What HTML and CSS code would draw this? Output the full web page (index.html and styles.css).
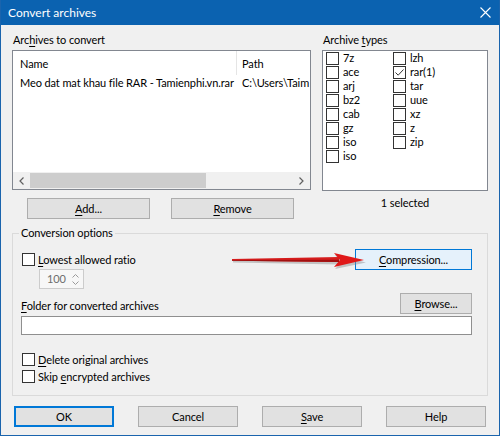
FILE: index.html
```html
<!DOCTYPE html>
<html>
<head>
<meta charset="utf-8">
<link rel="stylesheet" href="styles.css">
</head>
<body>
<div class="window">
  <div class="titlebar">
    <span class="title">Convert archives</span>
    <svg class="close" width="11" height="11" viewBox="0 0 11 11"><path d="M0.5 0.5 L10.5 10.5 M10.5 0.5 L0.5 10.5" stroke="#fff" stroke-width="1.1" fill="none"/></svg>
  </div>
  <div class="content">
    <div class="top">
      <div class="archives">
        <div class="label">Arc<u>h</u>ives to convert</div>
        <div class="listview">
          <div class="lv-header">
            <div class="col-name">Name</div>
            <div class="col-path">Path</div>
          </div>
          <div class="lv-body">
            <div class="lv-row">
              <div class="col-name">Meo dat mat khau file RAR - Tamienphi.vn.rar</div>
              <div class="col-path">C:\Users\Taim</div>
            </div>
          </div>
          <div class="hscroll">
            <div class="sb-btn"><svg width="5" height="8" viewBox="0 0 5 8"><path d="M4.5 0.5 L1 4 L4.5 7.5" stroke="#606060" stroke-width="1.2" fill="none"/></svg></div>
            <div class="sb-track"><div class="sb-thumb"></div></div>
            <div class="sb-btn"><svg width="5" height="8" viewBox="0 0 5 8"><path d="M0.5 0.5 L4 4 L0.5 7.5" stroke="#606060" stroke-width="1.2" fill="none"/></svg></div>
          </div>
        </div>
        <div class="btn-row">
          <button class="btn wide"><span><u>A</u>dd...</span></button>
          <button class="btn wide"><span><u>R</u>emove</span></button>
        </div>
      </div>
      <div class="types">
        <div class="label">Archive <u>t</u>ypes</div>
        <div class="types-box">
          <div class="ti"><span class="cb"></span><span>7z</span></div>
          <div class="ti"><span class="cb"></span><span>ace</span></div>
          <div class="ti"><span class="cb"></span><span>arj</span></div>
          <div class="ti"><span class="cb"></span><span>bz2</span></div>
          <div class="ti"><span class="cb"></span><span>cab</span></div>
          <div class="ti"><span class="cb"></span><span>gz</span></div>
          <div class="ti"><span class="cb"></span><span>iso</span></div>
          <div class="ti"><span class="cb"></span><span>iso</span></div>
          <div class="ti"><span class="cb"></span><span>lzh</span></div>
          <div class="ti"><span class="cb"><svg width="11" height="11" viewBox="0 0 11 11"><path d="M1.5 5.5 L4.2 8.2 L9.5 2.5" stroke="#333" stroke-width="1" fill="none"/></svg></span><span>rar(1)</span></div>
          <div class="ti"><span class="cb"></span><span>tar</span></div>
          <div class="ti"><span class="cb"></span><span>uue</span></div>
          <div class="ti"><span class="cb"></span><span>xz</span></div>
          <div class="ti"><span class="cb"></span><span>z</span></div>
          <div class="ti"><span class="cb"></span><span>zip</span></div>
        </div>
        <div class="selected">1 selected</div>
      </div>
    </div>

    <fieldset class="group">
      <legend>Conversion options</legend>
      <div class="row1">
        <div class="ratio">
          <div class="opt"><span class="cb"></span><span><u>L</u>owest allowed ratio</span></div>
          <div class="spinner">
            <div class="spin-val">100</div>
            <div class="spin-btns">
              <svg width="7" height="4" viewBox="0 0 7 4"><path d="M0.5 3.5 L3.5 0.5 L6.5 3.5" stroke="#9a9a9a" fill="none"/></svg>
              <svg width="7" height="4" viewBox="0 0 7 4"><path d="M0.5 0.5 L3.5 3.5 L6.5 0.5" stroke="#9a9a9a" fill="none"/></svg>
            </div>
          </div>
        </div>
        <button class="btn compress"><span><u>C</u>ompression...</span></button>
        <svg class="annot-arrow" width="136" height="20" viewBox="0 0 136 20">
          <polygon points="1,10 108,8.5 108,13.5 1,11.5" fill="#8a8a8a" opacity="0.45"/>
          <polygon points="103,4 134,11.5 103,18 109,11.5" fill="#8a8a8a" opacity="0.45"/>
          <polygon points="0,8 107,6 107,11 0,9.8" fill="#d51c1c"/>
          <polygon points="102,2 132,9 102,16 108,9" fill="#e01818"/>
          <polygon points="0,9.1 107,8.8 107,11 0,9.8" fill="#a01010"/>
        </svg>
      </div>
      <div class="row2">
        <span class="lbl"><u>F</u>older for converted archives</span>
        <button class="btn browse"><span><u>B</u>rowse...</span></button>
      </div>
      <div class="textbox"></div>
      <div class="checks">
        <div class="opt"><span class="cb"></span><span><u>D</u>elete original archives</span></div>
        <div class="opt"><span class="cb"></span><span>Skip <u>e</u>ncrypted archives</span></div>
      </div>
    </fieldset>

    <div class="footer">
      <button class="btn foot default">OK</button>
      <button class="btn foot">Cancel</button>
      <button class="btn foot"><span><u>S</u>ave</span></button>
      <button class="btn foot">Help</button>
    </div>
  </div>
</div>
</body>
</html>
```

FILE: styles.css
```css
* { box-sizing: border-box; }
html, body { margin: 0; padding: 0; }
body {
  font-family: Lato, "Open Sans", "Liberation Sans", sans-serif;
  font-size: 11px;
  letter-spacing: -0.1px;
  color: #000;
  background: #f0f0f0;
}
u { text-decoration-thickness: 1px; text-underline-offset: 1.5px; }

.window {
  width: 500px;
  height: 436px;
  background: #f0f0f0;
  border: 1px solid #1a64ad;
  border-top: 0;
  display: flex;
  flex-direction: column;
}
.titlebar {
  height: 25px;
  flex: none;
  background: #0b62b0;
  color: #fff;
  display: flex;
  align-items: center;
  justify-content: space-between;
  padding: 0 8px 0 7px;
}
.title { font-size: 12px; letter-spacing: 0; }
.close { display: block; }

.content {
  flex: 1;
  padding: 7px 11px 0 11px;
  display: flex;
  flex-direction: column;
}
.top { display: flex; gap: 11px; }
.archives { width: 299px; }
.types { width: 166px; }
.label { height: 16px; line-height: 16px; margin-bottom: 2px; padding-left: 1px; }

.listview {
  height: 140px;
  border: 1px solid #828790;
  background: #fff;
  display: flex;
  flex-direction: column;
  overflow: hidden;
}
.lv-header, .lv-row { display: flex; white-space: nowrap; }
.lv-header { height: 24px; flex: none; }
.lv-header > div { display: flex; align-items: center; }
.col-name { width: 224px; flex: none; padding-left: 7px; overflow: hidden; }
.lv-header .col-name { border-right: 1px solid #e5e5e5; }
.col-path { padding-left: 5px; }
.lv-body { flex: 1; }
.lv-row { height: 16px; line-height: 16px; }
.hscroll { height: 17px; flex: none; display: flex; background: #f0f0f0; }
.sb-btn { width: 17px; display: flex; align-items: center; justify-content: center; }
.sb-track { flex: 1; padding: 1px 0; }
.sb-thumb { width: 176px; height: 100%; background: #cdcdcd; }

.btn-row { display: flex; gap: 21px; padding-left: 15px; margin-top: 8px; }
.btn {
  height: 21px;
  border: 1px solid #adadad;
  background: #e1e1e1;
  font: inherit;
  letter-spacing: inherit;
  color: #000;
  padding: 0;
  display: flex;
  align-items: center;
  justify-content: center;
}
.wide { width: 123px; }

.types-box {
  height: 141px;
  border: 1px solid #828790;
  background: #fff;
  display: grid;
  grid-template-rows: repeat(8, 14px);
  grid-template-columns: 67px 1fr;
  grid-auto-flow: column;
  align-content: start;
  padding-left: 3px;
}
.ti { display: flex; align-items: center; gap: 4px; height: 14px; line-height: 12px; }
.cb {
  width: 13px;
  height: 13px;
  flex: none;
  border: 1px solid #333;
  background: #fff;
  display: flex;
  align-items: center;
  justify-content: center;
}
.selected { text-align: center; margin-top: 4px; line-height: 16px; }

.group {
  margin: 6px 0 0 0;
  padding: 8px 15px 10px 8px;
  border: 1px solid #dadada;
  min-width: 0;
}
.group legend { padding: 0 2px; margin-left: -2px; line-height: 16px; }

.row1 { display: flex; justify-content: space-between; align-items: flex-start; position: relative; }
.opt { display: flex; align-items: center; gap: 3px; margin-left: 1px; }
.ratio .opt { margin-top: 4px; height: 13px; line-height: 13px; }
.spinner {
  margin: 3px 0 0 18px;
  width: 45px;
  height: 20px;
  border: 1px solid #cccccc;
  background: #f7f7f7;
  display: flex;
}
.spin-val { flex: 1; padding-left: 7px; line-height: 18px; color: #6d6d6d; }
.spin-btns { width: 16px; display: flex; flex-direction: column; align-items: center; justify-content: center; gap: 3px; }
.spin-btns svg { display: block; }
.compress { width: 117px; background: #e5f1fb; border-color: #0078d7; }
.annot-arrow { position: absolute; left: 211px; top: 2px; }

.row2 { display: flex; justify-content: space-between; align-items: flex-end; margin-top: 4px; }
.row2 .lbl { line-height: 16px; }
.browse { width: 72px; }
.textbox { margin-top: 2px; height: 19px; border: 1px solid #8f8f8f; background: #fff; }
.checks { margin-top: 16px; display: flex; flex-direction: column; }
.checks .opt { height: 17px; line-height: 17px; }

.footer { display: flex; justify-content: space-between; padding: 0 2px; margin-top: 10px; }
.foot { width: 100px; }
.default { border-color: #0078d7; box-shadow: inset 0 0 0 1px #0078d7; }
```
